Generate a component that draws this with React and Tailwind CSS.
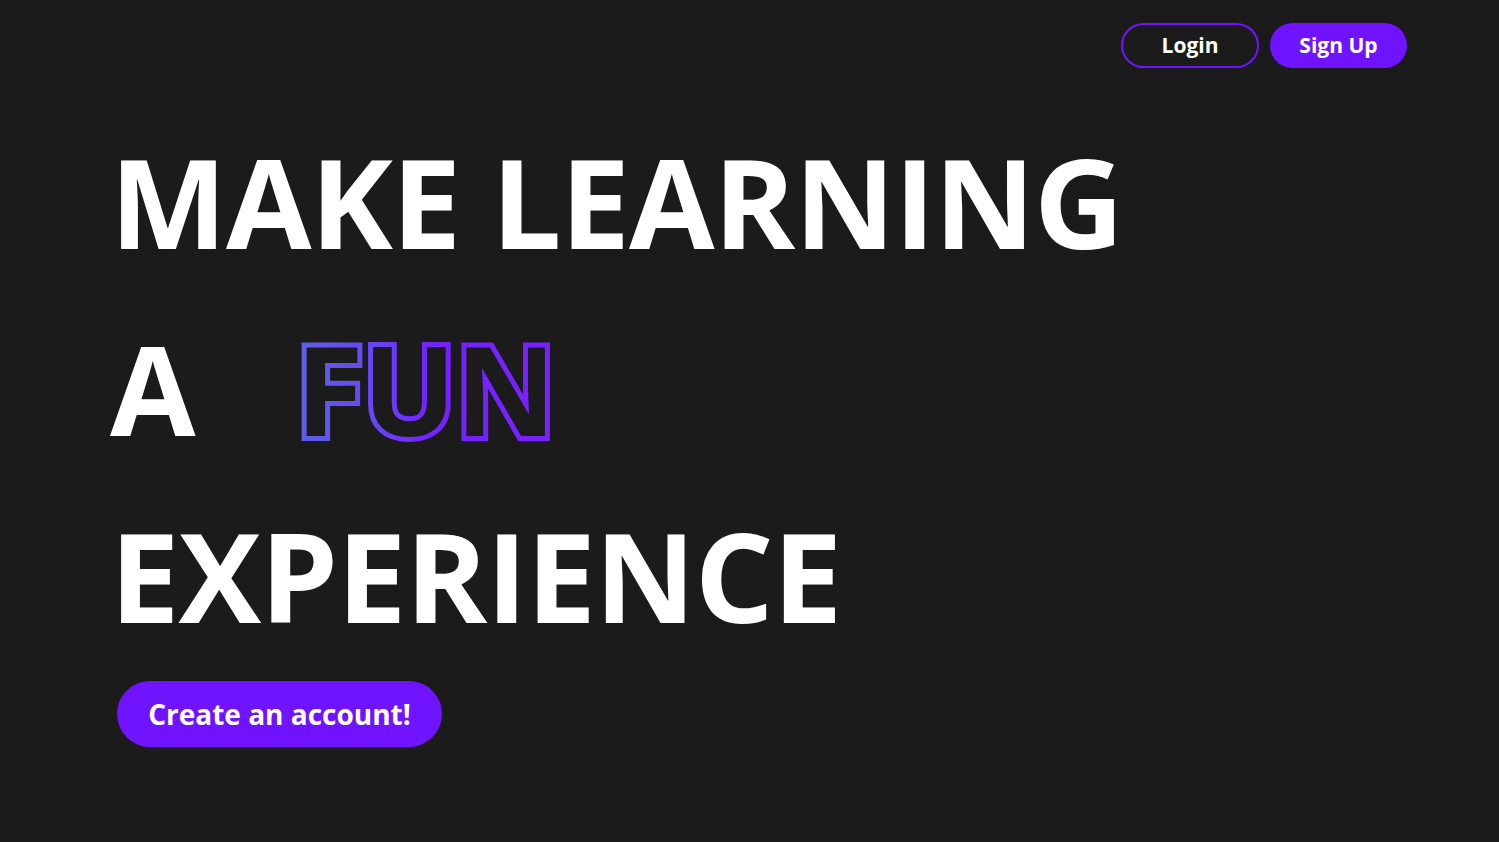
export default function App() {
  const font = { fontFamily: '"Open Sans", "Noto Sans", sans-serif' };
  return (
    <div className="min-h-screen w-full bg-[#1b1b1b] text-white" style={font}>
      <header className="flex justify-end gap-[11px] pt-[23px] pr-[92px]">
        <button className="h-[45px] w-[138px] rounded-full border-2 border-[#7014ff] text-[21px] font-bold text-white">
          Login
        </button>
        <button className="h-[45px] w-[137px] rounded-full bg-[#7014ff] text-[21px] font-bold text-white">
          Sign Up
        </button>
      </header>
      <main className="pl-[110px]">
        <h1 className="mt-[39px] text-[124px] font-bold leading-[187px] tracking-[-1px]">
          <div>MAKE LEARNING</div>
          <div className="flex">
            <span>A</span>
            <span className="ml-[101px] bg-gradient-to-r from-[#5a62e3] via-[#7223ff] to-[#7a20ff] bg-clip-text text-[#1b1b1b] [-webkit-text-stroke:10px_transparent] [paint-order:stroke_fill]">
              FUN
            </span>
          </div>
          <div>EXPERIENCE</div>
        </h1>
        <button className="mt-[13px] ml-[7px] h-[66px] w-[325px] rounded-full bg-[#7014ff] text-[28px] font-bold text-white">
          Create an account!
        </button>
      </main>
    </div>
  );
}
